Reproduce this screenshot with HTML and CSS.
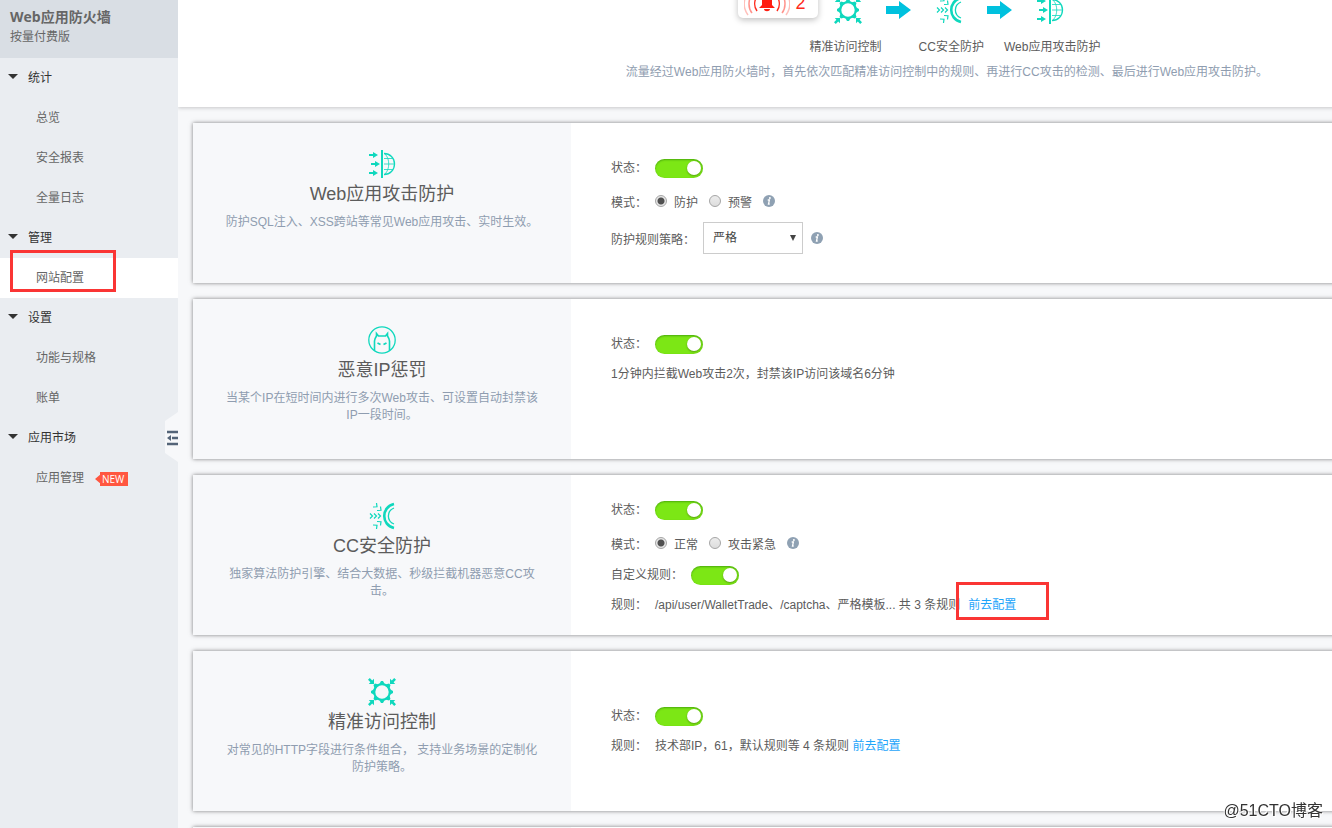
FILE: index.html
```html
<!DOCTYPE html>
<html lang="zh-CN">
<head>
    <meta charset="UTF-8">
    <meta name="viewport" content="width=device-width, initial-scale=1.0">
    <title>Web应用防火墙</title>
    <link rel="stylesheet" href="styles.css">
</head>
<body>
    <!-- shared icons -->
    <svg class="sprite" aria-hidden="true">
        <symbol id="icon-web" viewBox="0 0 28 28">
            <g fill="none" stroke="#0fd8bd">
                <path d="M14 0v28" stroke-width="2"/>
                <path d="M16 3.500c6 0 10.500 4.500 10.500 10.500S22 24.500 16 24.500" stroke-width="1.300"/>
                <path d="M16 14h10M16 8.500h8.500M16 19.500h8.500M17 4c5 5 5 15 0 20" stroke-width=".8"/>
                <path d="M1 5h5M3 14h5M1 23h5" stroke-width="1.800"/>
            </g>
            <path d="M5 2l5 3-5 3zM7 11l5 3-5 3zM5 20l5 3-5 3z" fill="#0fd8bd"/>
        </symbol>
        <symbol id="icon-ip" viewBox="0 0 28 28">
            <g fill="none" stroke="#0fd8bd">
                <circle cx="14" cy="14" r="13.200" stroke-width="1.300"/>
                <path d="M6.500 24.500V15c0-2 1-3.500 2-5V7.500l2 2.500h7l2-2.500V10c1 1.500 2 3 2 5v9.500" stroke-width="1.600"/>
                <path d="M9.500 17l3 1.500M18.500 17l-3 1.500" stroke-width="1.800"/>
            </g>
        </symbol>
        <symbol id="icon-cc" viewBox="0 0 28 28">
            <g fill="none" stroke="#0fd8bd">
                <path d="M26 2C13 5 13 23 26 26" stroke-width="2.600"/>
                <path d="M26 6c-7.500 3-7.500 13 0 16" stroke-width="1.300"/>
                <path d="M2 11.500l2.500 2.500L2 16.500M6 11.500l2.500 2.500L6 16.500M10 11.500l2.500 2.500-2.500 2.500" stroke-width="1.200"/>
                <path d="M8.500 1l.5 3.800-4 .2M12.500 4.500l.5 3.800-4 .2M5 23l4 .2-.5 3.800M9 19.500l4 .2-.5 3.800" stroke-width="1.200"/>
            </g>
        </symbol>
        <symbol id="icon-gear" viewBox="0 0 28 28">
            <circle cx="14" cy="14" r="7.800" fill="none" stroke="#0fd8bd" stroke-width="2.200"/>
            <g fill="#0fd8bd">
                <path id="tooth" d="M11 6.500L13 3h2l2 3.500z"/>
                <use href="#tooth" transform="rotate(45 14 14)"/>
                <use href="#tooth" transform="rotate(90 14 14)"/>
                <use href="#tooth" transform="rotate(135 14 14)"/>
                <use href="#tooth" transform="rotate(180 14 14)"/>
                <use href="#tooth" transform="rotate(225 14 14)"/>
                <use href="#tooth" transform="rotate(270 14 14)"/>
                <use href="#tooth" transform="rotate(315 14 14)"/>
                <path id="pointer" d="M0 1.800L1.800 0l2.400 2.400L6 .8V6H.8l1.600-1.800z"/>
                <use href="#pointer" transform="rotate(90 14 14)"/>
                <use href="#pointer" transform="rotate(180 14 14)"/>
                <use href="#pointer" transform="rotate(270 14 14)"/>
            </g>
        </symbol>
        <symbol id="icon-arrow" viewBox="0 0 25 18">
            <path d="M0 5h13V0l12 9-12 9v-5H0z" fill="#00c1de"/>
        </symbol>
        <symbol id="icon-info" viewBox="0 0 12 12">
            <circle cx="6" cy="6" r="6" fill="#8fa1b3"/>
            <circle cx="6.900" cy="2.900" r="1" fill="#fff"/>
            <path d="M4.700 5h1.700l-.9 4h1.200" fill="none" stroke="#fff" stroke-width="1.300"/>
        </symbol>
    </svg>

    <aside class="sidebar">
        <div class="product">
            <h1>Web应用防火墙</h1>
            <p>按量付费版</p>
        </div>
        <nav class="menu">
            <button class="menu-group">统计</button>
            <a class="menu-item" href="#">总览</a>
            <a class="menu-item" href="#">安全报表</a>
            <a class="menu-item" href="#">全量日志</a>
            <button class="menu-group">管理</button>
            <a class="menu-item active" href="#">网站配置<span class="mark mark-menu"></span></a>
            <button class="menu-group">设置</button>
            <a class="menu-item" href="#">功能与规格</a>
            <a class="menu-item" href="#">账单</a>
            <button class="menu-group">应用市场</button>
            <a class="menu-item" href="#">应用管理<span class="badge-new">NEW</span></a>
        </nav>
        <button class="collapse" aria-label="收起菜单">
            <svg width="13" height="50" viewBox="0 0 13 50">
                <path d="M13 0L0 9v32l13 9z" fill="#f7f8fa"/>
                <path d="M2 20h11M7 26h6M2 32h11" stroke="#546478" stroke-width="2.500"/>
                <path d="M2 26l4-3v6z" fill="#546478"/>
            </svg>
        </button>
    </aside>

    <main class="main">
        <section class="intro">
            <div class="flow">
                <div class="flow-icons">
                    <div class="alarm">
                        <svg width="46" height="30" viewBox="0 0 46 30">
                            <g fill="none" stroke="#ff2a1c" stroke-width="1.500">
                                <path d="M13 8c-3 5-3 11 0 15M33 8c3 5 3 11 0 15"/>
                                <path d="M8 6c-4 6-4 14 0 19M38 6c4 6 4 14 0 19" opacity=".5"/>
                                <path d="M4 4c-5 8-5 16 0 23M42 4c5 8 5 16 0 23" opacity=".3"/>
                            </g>
                            <path d="M23 4c-5 0-5 4-5 8v5l-3 3h16l-3-3v-5c0-4 0-8-5-8zM20 21h6c0 3-6 3-6 0z" fill="#ff1c10"/>
                        </svg>
                        <span>2</span>
                    </div>
                    <svg width="28" height="28"><use href="#icon-gear"/></svg>
                    <svg width="25" height="18"><use href="#icon-arrow"/></svg>
                    <svg width="28" height="28"><use href="#icon-cc"/></svg>
                    <svg width="25" height="18"><use href="#icon-arrow"/></svg>
                    <svg width="28" height="28"><use href="#icon-web"/></svg>
                </div>
                <div class="flow-labels">
                    <span class="wide">精准访问控制</span>
                    <span>CC安全防护</span>
                    <span>Web应用攻击防护</span>
                </div>
            </div>
            <p class="intro-text">流量经过Web应用防火墙时，首先依次匹配精准访问控制中的规则、再进行CC攻击的检测、最后进行Web应用攻击防护。</p>
        </section>

        <section class="card">
            <div class="summary">
                <svg width="28" height="28"><use href="#icon-web"/></svg>
                <h2>Web应用攻击防护</h2>
                <p>防护SQL注入、XSS跨站等常见Web应用攻击、实时生效。</p>
            </div>
            <div class="settings">
                <div class="row">
                    <label for="web-status">状态：</label>
                    <input class="switch" type="checkbox" id="web-status" checked>
                </div>
                <div class="row row-mode">
                    <span>模式：</span>
                    <label class="option"><input type="radio" name="web-mode" checked>防护</label>
                    <label class="option"><input type="radio" name="web-mode">预警</label>
                    <svg width="12" height="12"><use href="#icon-info"/></svg>
                </div>
                <div class="row row-select">
                    <label for="web-policy">防护规则策略：</label>
                    <span class="select">
                        <select id="web-policy">
                            <option>严格</option>
                        </select>
                    </span>
                    <svg width="12" height="12"><use href="#icon-info"/></svg>
                </div>
            </div>
        </section>

        <section class="card">
            <div class="summary">
                <svg width="28" height="28"><use href="#icon-ip"/></svg>
                <h2>恶意IP惩罚</h2>
                <p>当某个IP在短时间内进行多次Web攻击、可设置自动封禁该IP一段时间。</p>
            </div>
            <div class="settings">
                <div class="row">
                    <label for="ip-status">状态：</label>
                    <input class="switch" type="checkbox" id="ip-status" checked>
                </div>
                <div class="row">1分钟内拦截Web攻击2次，封禁该IP访问该域名6分钟</div>
            </div>
        </section>

        <section class="card">
            <div class="summary">
                <svg width="28" height="28"><use href="#icon-cc"/></svg>
                <h2>CC安全防护</h2>
                <p>独家算法防护引擎、结合大数据、秒级拦截机器恶意CC攻击。</p>
            </div>
            <div class="settings settings-long">
                <div class="row">
                    <label for="cc-status">状态：</label>
                    <input class="switch" type="checkbox" id="cc-status" checked>
                </div>
                <div class="row row-mode">
                    <span>模式：</span>
                    <label class="option"><input type="radio" name="cc-mode" checked>正常</label>
                    <label class="option"><input type="radio" name="cc-mode">攻击紧急</label>
                    <svg width="12" height="12"><use href="#icon-info"/></svg>
                </div>
                <div class="row">
                    <label for="cc-custom">自定义规则：</label>
                    <input class="switch" type="checkbox" id="cc-custom" checked>
                </div>
                <div class="row">
                    <span>规则：</span>
                    <span>/api/user/WalletTrade、/captcha、严格模板... 共 3 条规则</span>
                    <a class="link" href="#">前去配置<span class="mark mark-link"></span></a>
                </div>
            </div>
        </section>

        <section class="card">
            <div class="summary">
                <svg width="28" height="28"><use href="#icon-gear"/></svg>
                <h2>精准访问控制</h2>
                <p>对常见的HTTP字段进行条件组合， 支持业务场景的定制化防护策略。</p>
            </div>
            <div class="settings settings-short">
                <div class="row">
                    <label for="acl-status">状态：</label>
                    <input class="switch" type="checkbox" id="acl-status" checked>
                </div>
                <div class="row">
                    <span>规则：</span>
                    <span>技术部IP，61，默认规则等 4 条规则 <a class="link" href="#">前去配置</a></span>
                </div>
            </div>
        </section>

        <section class="card">
            <div class="summary"></div>
            <div class="settings"></div>
        </section>
    </main>

    <div class="watermark">@51CTO博客</div>
</body>
</html>
```
FILE: styles.css
```css
* {
    box-sizing: border-box;
}

body {
    margin: 0;
    display: flex;
    height: 100vh;
    overflow: hidden;
    font-family: "Liberation Sans", "Noto Sans CJK SC", sans-serif;
    font-size: 12px;
    color: #5c5c5c;
    background: #f7f8fa;
}

h1, h2, p {
    margin: 0;
}

button {
    font: inherit;
    border: 0;
    padding: 0;
    background: none;
    cursor: pointer;
}

a {
    text-decoration: none;
}

svg {
    display: block;
    flex: none;
}

.sprite {
    position: absolute;
    width: 0;
    height: 0;
}

/* sidebar */
.sidebar {
    position: relative;
    flex: 0 0 178px;
    background: #eaedf1;
}

.product {
    height: 58px;
    padding: 8px 10px;
    background: #d9dee4;
    color: #666;
    line-height: 22px;
}

.product h1 {
    font-family: "Open Sans", "Noto Sans CJK SC", sans-serif;
    font-size: 14px;
    line-height: 18px;
}

.menu {
    display: flex;
    flex-direction: column;
}

.menu-group {
    display: flex;
    align-items: center;
    gap: 10px;
    height: 40px;
    padding: 0 0 4px 8px;
    color: #333;
}

.menu-group::before {
    content: "";
    border: 5px solid transparent;
    border-top: 5px solid #333;
    border-bottom: 0;
}

.menu-item {
    position: relative;
    display: flex;
    align-items: center;
    height: 40px;
    padding: 0 0 4px 36px;
    color: #666;
}

.menu-item.active {
    background: #fff;
}

.badge-new {
    margin: 6px 0 0 11px;
    padding: 0 4px 0 7px;
    background: #ff5640;
    clip-path: polygon(0 50%, 5px 20%, 5px 0, 100% 0, 100% 100%, 5px 100%, 5px 80%);
    color: #fff;
    font-family: "Open Sans", sans-serif;
    font-size: 10px;
    line-height: 14px;
}

.collapse {
    position: absolute;
    right: 0;
    top: 412px;
}

.mark {
    position: absolute;
    border: 3px solid #fa3534;
}

.mark-menu {
    left: 10px;
    top: -8px;
    width: 106px;
    height: 42px;
}

.mark-link {
    left: -12px;
    top: -13px;
    width: 93px;
    height: 38px;
}

/* content */
.main {
    flex: 1 0 1538px;
}

.intro {
    display: flex;
    flex-direction: column;
    justify-content: flex-end;
    align-items: center;
    height: 107px;
    padding-bottom: 25px;
    overflow: hidden;
    background: #fff;
    box-shadow: 0 1px 4px rgba(0, 0, 0, .2);
}

.flow {
    margin-right: 56px;
}

.flow-icons {
    display: flex;
    align-items: center;
    gap: 24px;
}

.alarm {
    display: flex;
    align-items: center;
    gap: 6px;
    width: 80px;
    height: 48px;
    margin: -32px -8px 0 0;
    padding: 18px 6px 0;
    border-radius: 5px;
    box-shadow: 0 2px 6px rgba(0, 0, 0, .25);
    color: #ff2a1c;
    font-size: 18px;
}

.flow-labels {
    display: flex;
    gap: 20px;
    padding: 10px 0 2px 72px;
    line-height: 26px;
}

.flow-labels .wide {
    margin-right: 17px;
}

.intro-text {
    color: #8f9db0;
    line-height: 20px;
}

.card {
    display: flex;
    min-height: 160px;
    margin: 16px 15px 0;
    background: #fff;
    box-shadow: 0 0 4px rgba(0, 0, 0, .5);
}

.summary {
    display: flex;
    flex-direction: column;
    align-items: center;
    flex: 0 0 378px;
    padding: 27px 32px 0;
    background: #f7f8fa;
    text-align: center;
}

.summary h2 {
    font-size: 18px;
    font-weight: normal;
    line-height: 32px;
}

.summary p {
    margin-top: 4px;
    color: #8f9db0;
    line-height: 17px;
}

.settings {
    flex: 1;
    padding: 28px 40px 0;
}

.settings-long {
    padding-top: 18px;
}

.settings-short {
    padding-top: 48px;
}

.row {
    display: flex;
    align-items: center;
    gap: 8px;
    height: 30px;
}

.row-mode {
    gap: 11px;
    margin-top: 5px;
}

.row-mode > span {
    margin-right: -3px;
}

.row-select {
    height: 44px;
}

.option {
    display: flex;
    align-items: center;
    gap: 7px;
}

.option input {
    appearance: none;
    width: 12px;
    height: 12px;
    margin: 0;
    border: 1px solid #a5a5a5;
    border-radius: 50%;
    background: linear-gradient(#ececec, #ddd);
}

.option input:checked {
    background: radial-gradient(#505050 0 3px, #e6e6e6 4px);
}

.switch {
    appearance: none;
    display: flex;
    justify-content: flex-end;
    align-items: center;
    width: 48px;
    height: 19px;
    margin: 4px 0 0;
    padding: 0 2px;
    border-radius: 10px;
    background: #7ce715;
    box-shadow: inset 0 1px 2px rgba(0, 80, 0, .4);
    cursor: pointer;
}

.switch::before {
    content: "";
    width: 14px;
    height: 14px;
    border-radius: 50%;
    background: #fff;
    box-shadow: 0 1px 2px rgba(0, 0, 0, .3);
}

.switch:not(:checked) {
    justify-content: flex-start;
    background: #ccc;
}

.select {
    position: relative;
}

.select::after {
    content: "";
    position: absolute;
    right: 7px;
    top: 13px;
    border: 3px solid transparent;
    border-top: 6px solid #444;
    border-bottom: 0;
    pointer-events: none;
}

.select select {
    display: block;
    appearance: none;
    width: 100px;
    height: 32px;
    padding: 0 9px;
    border: 1px solid #ccc;
    border-radius: 0;
    background: #fff;
    color: #444;
    font: inherit;
}

.link {
    position: relative;
    color: #1ea5fa;
}

.watermark {
    position: fixed;
    right: 9px;
    bottom: 6px;
    color: #333;
    font-size: 16px;
    line-height: 22px;
    text-shadow: 1px 1px 0 #fff, -1px -1px 0 #fff;
}
```
